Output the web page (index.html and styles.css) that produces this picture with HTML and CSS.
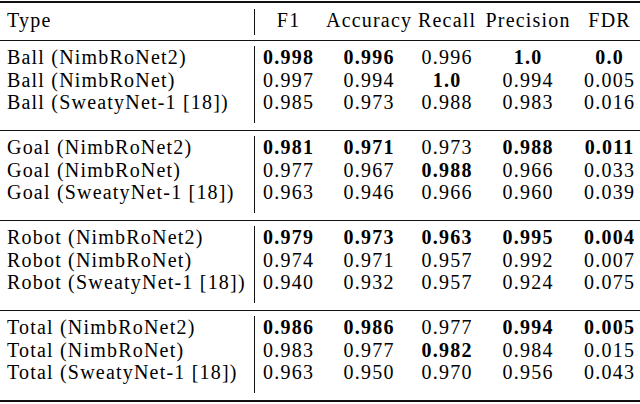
FILE: index.html
```html
<!DOCTYPE html>
<html>
<head>
<meta charset="utf-8">
<link rel="stylesheet" href="styles.css">
</head>
<body>
<div class="table">
  <div class="head">
    <div class="row">
      <div class="c name">Type</div>
      <div class="c first">F1</div>
      <div class="c">Accuracy</div>
      <div class="c">Recall</div>
      <div class="c">Precision</div>
      <div class="c">FDR</div>
    </div>
  </div>
  <div class="group">
    <div class="row">
      <div class="c name">Ball (NimbRoNet2)</div>
      <div class="c first"><b>0.998</b></div>
      <div class="c"><b>0.996</b></div>
      <div class="c">0.996</div>
      <div class="c"><b>1.0</b></div>
      <div class="c"><b>0.0</b></div>
    </div>
    <div class="row">
      <div class="c name">Ball (NimbRoNet)</div>
      <div class="c first">0.997</div>
      <div class="c">0.994</div>
      <div class="c"><b>1.0</b></div>
      <div class="c">0.994</div>
      <div class="c">0.005</div>
    </div>
    <div class="row">
      <div class="c name">Ball (SweatyNet-1 [18])</div>
      <div class="c first">0.985</div>
      <div class="c">0.973</div>
      <div class="c">0.988</div>
      <div class="c">0.983</div>
      <div class="c">0.016</div>
    </div>
  </div>
  <div class="group">
    <div class="row">
      <div class="c name">Goal (NimbRoNet2)</div>
      <div class="c first"><b>0.981</b></div>
      <div class="c"><b>0.971</b></div>
      <div class="c">0.973</div>
      <div class="c"><b>0.988</b></div>
      <div class="c"><b>0.011</b></div>
    </div>
    <div class="row">
      <div class="c name">Goal (NimbRoNet)</div>
      <div class="c first">0.977</div>
      <div class="c">0.967</div>
      <div class="c"><b>0.988</b></div>
      <div class="c">0.966</div>
      <div class="c">0.033</div>
    </div>
    <div class="row">
      <div class="c name">Goal (SweatyNet-1 [18])</div>
      <div class="c first">0.963</div>
      <div class="c">0.946</div>
      <div class="c">0.966</div>
      <div class="c">0.960</div>
      <div class="c">0.039</div>
    </div>
  </div>
  <div class="group">
    <div class="row">
      <div class="c name">Robot (NimbRoNet2)</div>
      <div class="c first"><b>0.979</b></div>
      <div class="c"><b>0.973</b></div>
      <div class="c"><b>0.963</b></div>
      <div class="c"><b>0.995</b></div>
      <div class="c"><b>0.004</b></div>
    </div>
    <div class="row">
      <div class="c name">Robot (NimbRoNet)</div>
      <div class="c first">0.974</div>
      <div class="c">0.971</div>
      <div class="c">0.957</div>
      <div class="c">0.992</div>
      <div class="c">0.007</div>
    </div>
    <div class="row">
      <div class="c name">Robot (SweatyNet-1 [18])</div>
      <div class="c first">0.940</div>
      <div class="c">0.932</div>
      <div class="c">0.957</div>
      <div class="c">0.924</div>
      <div class="c">0.075</div>
    </div>
  </div>
  <div class="group last">
    <div class="row">
      <div class="c name">Total (NimbRoNet2)</div>
      <div class="c first"><b>0.986</b></div>
      <div class="c"><b>0.986</b></div>
      <div class="c">0.977</div>
      <div class="c"><b>0.994</b></div>
      <div class="c"><b>0.005</b></div>
    </div>
    <div class="row">
      <div class="c name">Total (NimbRoNet)</div>
      <div class="c first">0.983</div>
      <div class="c">0.977</div>
      <div class="c"><b>0.982</b></div>
      <div class="c">0.984</div>
      <div class="c">0.015</div>
    </div>
    <div class="row">
      <div class="c name">Total (SweatyNet-1 [18])</div>
      <div class="c first">0.963</div>
      <div class="c">0.950</div>
      <div class="c">0.970</div>
      <div class="c">0.956</div>
      <div class="c">0.043</div>
    </div>
  </div>
</div>
</body>
</html>
```

FILE: styles.css
```css
html, body {
  margin: 0;
  padding: 0;
  background: #ffffff;
}

body {
  font-family: "Liberation Serif", "Times New Roman", serif;
  font-size: 20px;
  letter-spacing: 1.2px;
  color: #000000;
}

.table {
  width: 640px;
  padding-top: 1px;
}

.head {
  border-top: 2px solid #111111;
  border-bottom: 1px solid #111111;
  padding: 6px 0 5px;
}

.head .row .c {
  height: 26px;
}

.row {
  display: grid;
  grid-template-columns: 254px 67px 95px 61px 101px 62px;
  line-height: 22.7px;
  white-space: nowrap;
}

.c {
  text-align: center;
  padding-left: 1.2px;
}

.c.name {
  text-align: left;
  padding-left: 7px;
}

.c.first {
  border-left: 1px solid #111111;
}

.group {
  padding: 4.9px 0 7px;
  border-bottom: 1px solid #111111;
}

.group .row:last-child .c {
  padding-bottom: 9px;
}

.group.last {
  border-bottom: 2px solid #111111;
}

b {
  font-weight: bold;
}
```
